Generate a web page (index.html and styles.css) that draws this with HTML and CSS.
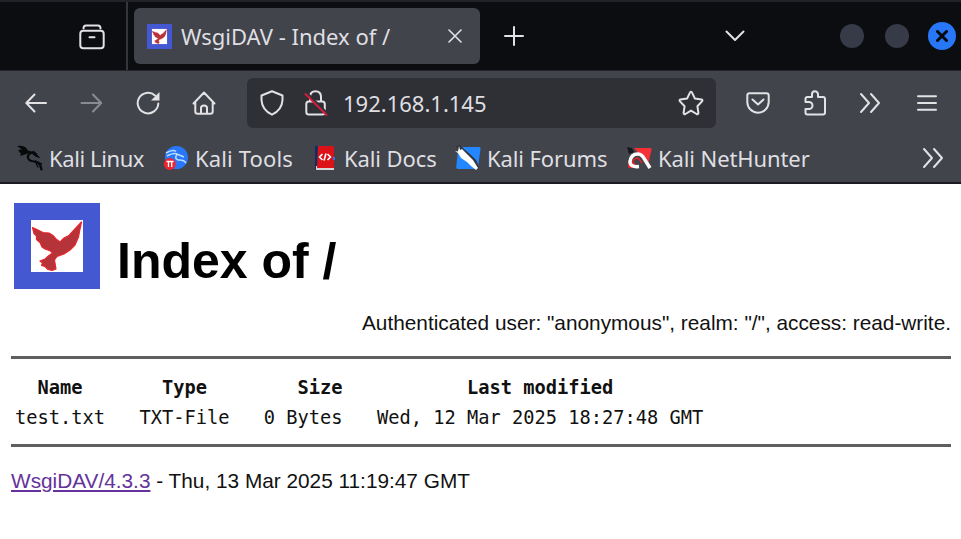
FILE: index.html
```html
<!DOCTYPE html>
<html lang="en">

<head>
    <meta charset="UTF-8">
    <meta name="viewport" content="width=device-width, initial-scale=1.0">
    <title>WsgiDAV - Index of /</title>
    <link rel="stylesheet" href="styles.css">
</head>

<body>
    <!-- bird used by the favicon and the page logo -->
    <svg class="defs" width="0" height="0">
        <symbol id="logo" viewBox="0 0 86 86">
            <rect width="86" height="86" fill="#4458d1" />
            <rect x="17" y="17" width="52" height="52" fill="#fff" />
            <path d="M18.500 24.500L23 26.500L29 29.500L35 30L39 32.500L42 36L46 39L50 35L55 32.500L60 27L67.500 19L66 26L64.500 34L61 42L56 47L50 51L43 53.500L40.500 57L42 66L38 67.500L34 66.500L31 63.500L27.500 62.500L28.500 60L26 58L31 56L35 52.500L38.500 50L36.500 48L31 46L28 44L26 39.500L22.500 36.500L22.500 33L20 30.500Z" fill="#b5343a" stroke="#e8252b" stroke-width="1.200" stroke-linejoin="round" />
        </symbol>
        <symbol id="more" viewBox="0 0 22 22">
            <path d="M2 2l8 9-8 9M12 2l8 9-8 9" />
        </symbol>
    </svg>

    <div class="browser">
        <div class="tabbar">
            <div class="view">
                <svg class="icon" width="26" height="26" viewBox="0 0 26 26">
                    <path d="M4.500 4.500Q4.500 1.500 7 1.500H19Q21.500 1.500 21.500 4.500" />
                    <rect x="1.300" y="6.800" width="23.400" height="17.400" rx="3" />
                    <path d="M10.500 13.200h5" />
                </svg>
            </div>
            <div class="tab">
                <svg width="25" height="25"><use href="#logo" /></svg>
                <span class="tabtitle">WsgiDAV - Index of /</span>
                <svg class="icon thin" width="14" height="14" viewBox="0 0 14 14">
                    <path d="M1 1l12 12M13 1L1 13" />
                </svg>
            </div>
            <svg class="icon newtab" width="20" height="20" viewBox="0 0 20 20">
                <path d="M10 1v18M1 10h18" />
            </svg>
            <svg class="icon list" width="20" height="12" viewBox="0 0 20 12">
                <path d="M1.500 1.500L10 10l8.500-8.500" />
            </svg>
            <div class="winbtn"></div>
            <div class="winbtn"></div>
            <div class="winbtn close">
                <svg width="12" height="12" viewBox="0 0 12 12">
                    <path d="M1.500 1.500l9 9M10.500 1.500l-9 9" />
                </svg>
            </div>
        </div>

        <div class="toolbar">
            <div class="nav">
                <svg class="icon" width="24" height="24" viewBox="0 0 24 24">
                    <path d="M22 12H2.500M10.500 3.500L2.300 12l8.200 8.500" />
                </svg>
                <svg class="icon off" width="24" height="24" viewBox="0 0 24 24">
                    <path d="M1.500 12H21M13 3.500l8.200 8.500-8.200 8.500" />
                </svg>
                <svg class="icon" width="24" height="24" viewBox="0 0 24 24">
                    <path d="M19 4.500A10.300 10.300 0 1 0 22.300 12.500" />
                    <path d="M23.500 1v8.500H15z" class="solid" />
                </svg>
                <svg class="icon" width="24" height="24" viewBox="0 0 24 24">
                    <path d="M1.500 12.500L12 1.500l10.500 11M3.300 11v9.500q0 2.300 2.300 2.300h12.800q2.300 0 2.300-2.300V11M9 22.500V17q0-2.500 3-2.500t3 2.500v5.500" />
                </svg>
            </div>
            <div class="urlbar">
                <svg class="icon" width="24" height="26" viewBox="0 0 24 26">
                    <path d="M12 1.300L22.500 5.500V10Q22 20 12 24.700 2 20 1.500 10V5.500Z" />
                </svg>
                <svg class="icon lock" width="24" height="26" viewBox="0 0 24 26">
                    <path d="M6 11V7Q6 1.300 11.500 1.300T17 7v4" />
                    <rect x="2.300" y="11.500" width="18.500" height="13" rx="2.500" />
                    <path d="M4 4l21 21" class="gap" />
                    <path d="M1.500 4l21 21" class="slash" />
                </svg>
                <span class="url">192.168.1.145</span>
                <svg class="icon" width="26" height="26" viewBox="0 0 26 26">
                    <path d="M13 1.800q.8 0 1.200 1l2.600 5.600 6.700 1q1.600.6.500 2l-4.600 4.800 1 6.800q-.3 1.700-1.800 1L13 20.600 7.400 24q-1.500.7-1.800-1l1-6.800L2 11.400q-1.100-1.400.5-2l6.700-1 2.600-5.600q.4-1 1.200-1z" />
                </svg>
            </div>
            <svg class="icon pocket" width="24" height="22" viewBox="0 0 24 22">
                <path d="M3.500 1.300h17q2.200 0 2.200 2.200V10A10.700 10.700 0 0 1 1.300 10V3.500q0-2.200 2.200-2.200z" />
                <path d="M6.500 7.500l5.500 5 5.500-5" />
            </svg>
            <svg class="icon puzzle" width="23" height="26" viewBox="0 0 23 26">
                <path d="M1.500 12V9q0-2 2-2H8V4.300a3 3 0 0 1 6 0V7h5q2 0 2 2v13.500q0 2-2 2H3.500q-2 0-2-2V19H5a3.400 3.400 0 0 0 0-7z" />
            </svg>
            <svg class="icon more" width="22" height="22"><use href="#more" /></svg>
            <svg class="icon menu" width="20" height="16" viewBox="0 0 20 16">
                <path d="M1 1.300h18M1 8h18M1 14.700h18" />
            </svg>
        </div>

        <div class="bookmarks">
            <div class="bookmark linux">
                <svg width="26" height="26" viewBox="0 0 26 26" fill="none" stroke="#08090b" stroke-linecap="round">
                    <path d="M0 1q7-1 10 3l2 4-8 1L1 5l4-.500z" fill="#08090b" stroke="none" />
                    <path d="M4 10l6-2" stroke-width="1.500" />
                    <path d="M10 6.500q3 0 4 1.500-4 2-3 5t6 3.500q6 0 7.500 8" stroke-width="2.200" />
                    <path d="M14 7q4-2 6 3l2.500 2.500-4-1.500z" fill="#08090b" stroke-width="1" />
                    <path d="M18 16l6.500 3M19 18l2 4" stroke-width="1.400" />
                </svg>
                <span>Kali Linux</span>
            </div>
            <div class="bookmark tools">
                <svg width="26" height="26" viewBox="0 0 26 26">
                    <circle cx="13.500" cy="12.500" r="11.500" fill="#2777f8" />
                    <path d="M3 8q7-4 10-1.500M4 11q7-4 11-1.500l6 2.500M14 9.500q-3 4 1 5.500 6-.500 8 3" fill="none" stroke="#b9dcff" stroke-width="1.600" />
                    <circle cx="6.800" cy="19" r="6" fill="#ea2630" />
                    <path d="M3.500 16.500h7M5.500 17v5M8.700 17v5" fill="none" stroke="#fff" stroke-width="1.300" />
                </svg>
                <span>Kali Tools</span>
            </div>
            <div class="bookmark">
                <svg width="26" height="26" viewBox="0 0 26 26">
                    <path d="M3 1h4v24H3z" fill="#142a63" />
                    <path d="M4 21h18v4H4z" fill="#d8d5d7" />
                    <path d="M6 1h14q2 0 2 2v20H5z" fill="#dd1218" />
                    <path d="M22 12v3" stroke="#2777f8" stroke-width="2" />
                    <path d="M10.500 9l-3 3 3 3M14 8.500l-2 7M15.500 9l3 3-3 3" fill="none" stroke="#fff" stroke-width="1.600" />
                </svg>
                <span>Kali Docs</span>
            </div>
            <div class="bookmark">
                <svg width="26" height="26" viewBox="0 0 26 26">
                    <path d="M6 2h18q2 0 1.500 2L23 22q-.3 2-2 2H3q-2 0-1.800-2L3 5z" fill="#2388ff" />
                    <path d="M1 1l4-1 4 4 7 6 5 5 3 7-2 3-4-3-4-5-6-4-5-6z" fill="#30343b" />
                    <path d="M4 1l1 4 2-1 6 6 5 5 5 8-2 2-5-4-4-4-6-4-3-5-3-2 3 .500z" fill="#fff" />
                </svg>
                <span>Kali Forums</span>
            </div>
            <div class="bookmark">
                <svg width="26" height="26" viewBox="0 0 26 26">
                    <path d="M1 2l5 1 2 4-5 2z" fill="#17191d" />
                    <path d="M8 3h16q2 0 1.500 2L22 20 12 8z" fill="#f53138" />
                    <path d="M2 22q0-7 3-8l8 9H3q-1 0-1-1z" fill="#e5222c" />
                    <path d="M13 21.500q-9 1-9-5Q5 9 12 9q4 0 7 6l5 8" fill="none" stroke="#fff" stroke-width="3.500" />
                    <path d="M7 16q1-3 5-3l4 5" fill="none" stroke="#e5222c" stroke-width="1.500" />
                </svg>
                <span>Kali NetHunter</span>
            </div>
            <svg class="icon" width="22" height="22"><use href="#more" /></svg>
        </div>
    </div>

    <div class="page">
        <h1><svg width="86" height="86"><use href="#logo" /></svg><span>Index of /</span></h1>
        <p class="user">Authenticated user: "anonymous", realm: "/", access: read-write.</p>
        <hr>
        <table>
            <tr>
                <th>Name</th>
                <th>Type</th>
                <th class="right">Size</th>
                <th>Last modified</th>
            </tr>
            <tr>
                <td>test.txt</td>
                <td>TXT-File</td>
                <td class="right">0 Bytes</td>
                <td>Wed, 12 Mar 2025 18:27:48 GMT</td>
            </tr>
        </table>
        <hr>
        <p class="footer"><a href="#">WsgiDAV/4.3.3</a> - Thu, 13 Mar 2025 11:19:47 GMT</p>
    </div>
</body>

</html>
```
FILE: styles.css
```css
* {
    box-sizing: border-box;
}

body {
    margin: 0;
    background-color: white;
    color: #111;
    font-family: "Liberation Sans", Arial, sans-serif;
    font-size: 20.8px;
    overflow: hidden;
}

svg {
    display: block;
    flex: none;
}

.defs {
    position: absolute;
}

.browser {
    height: 184px;
    background-color: #42444c;
    border-bottom: 2px solid #1c1b22;
    color: #dfdfe1;
    font-family: "Noto Sans", sans-serif;
    font-size: 22px;
    white-space: nowrap;
}

.icon {
    fill: none;
    stroke: #e2e2e4;
    stroke-width: 2;
    stroke-linecap: round;
    stroke-linejoin: round;
}

.thin {
    stroke-width: 1.6;
}

.off {
    stroke: #8b8c91;
}

.solid {
    fill: #e2e2e4;
    stroke: none;
}

.gap {
    stroke: #2f3036;
}

.slash {
    stroke: #d41c3c;
}

/* tabs */
.tabbar {
    display: flex;
    align-items: center;
    height: 71px;
    background-color: #0c0d11;
    border-top: 2px solid #202328;
    border-bottom: 1px solid #24262c;
}

.view {
    width: 128px;
    height: 68px;
    padding: 22px 0 0 79px;
    border-right: 2px solid #34363b;
}

.tab {
    display: flex;
    align-items: center;
    width: 346px;
    height: 56px;
    margin-left: 6px;
    padding: 0 18px 0 13px;
    background-color: #42444c;
    border-radius: 6px;
}

.tabtitle {
    flex: 1;
    margin-left: 9px;
}

.newtab {
    margin-left: 24px;
}

.list {
    margin-left: 201px;
    margin-right: 95px;
}

.winbtn {
    width: 24px;
    height: 24px;
    margin-right: 21px;
    border-radius: 50%;
    background-color: #373a47;
}

.close {
    display: flex;
    align-items: center;
    justify-content: center;
    width: 28px;
    height: 28px;
    margin: 0 0 0 -2px;
    background-color: #2777f7;
    stroke: #07090e;
    stroke-width: 3;
    stroke-linecap: round;
}

/* navigation */
.toolbar {
    display: flex;
    align-items: center;
    height: 64px;
    padding-left: 24px;
}

.nav {
    display: flex;
    gap: 32px;
    width: 223px;
}

.urlbar {
    display: flex;
    align-items: center;
    width: 469px;
    height: 50px;
    padding: 0 12px 0 13px;
    background-color: #2f3036;
    border-radius: 6px;
}

.lock {
    margin-left: 20px;
}

.url {
    flex: 1;
    margin-left: 15px;
}

.pocket {
    margin-left: 30px;
}

.puzzle {
    margin-left: 34px;
}

.more {
    margin-left: 32px;
}

.menu {
    margin-left: 36px;
}

/* bookmarks */
.bookmarks {
    display: grid;
    grid-template-columns: 146px 149px 143px 171px 296px 22px;
    align-items: center;
    height: 45px;
    padding-left: 17px;
}

.bookmark {
    display: flex;
    align-items: center;
    gap: 6px;
    letter-spacing: -0.1px;
}

.linux {
    letter-spacing: -0.4px;
}

.tools {
    letter-spacing: 0.15px;
}

/* directory listing */
.page {
    padding: 19px 10px 0 11px;
}

h1 {
    display: flex;
    align-items: flex-end;
    margin: 0;
    padding-left: 3px;
    color: black;
    font-size: 50px;
    line-height: 56px;
}

h1 span {
    margin-left: 17px;
}

p {
    margin: 0;
    line-height: 24px;
}

.user {
    margin: 22px 0 21px;
    text-align: right;
}

hr {
    height: 3px;
    margin: 0;
    border: none;
    background-color: #5f5f5f;
}

table {
    margin: 14px 0 11px 4px;
    border-collapse: collapse;
    font-family: "DejaVu Sans Mono", monospace;
    font-size: 18.7px;
    line-height: 30px;
}

th,
td {
    padding: 0 34.4px 0 0;
    white-space: nowrap;
}

.right {
    text-align: right;
}

.footer {
    margin-top: 22px;
}

a {
    color: #65329b;
}
```
